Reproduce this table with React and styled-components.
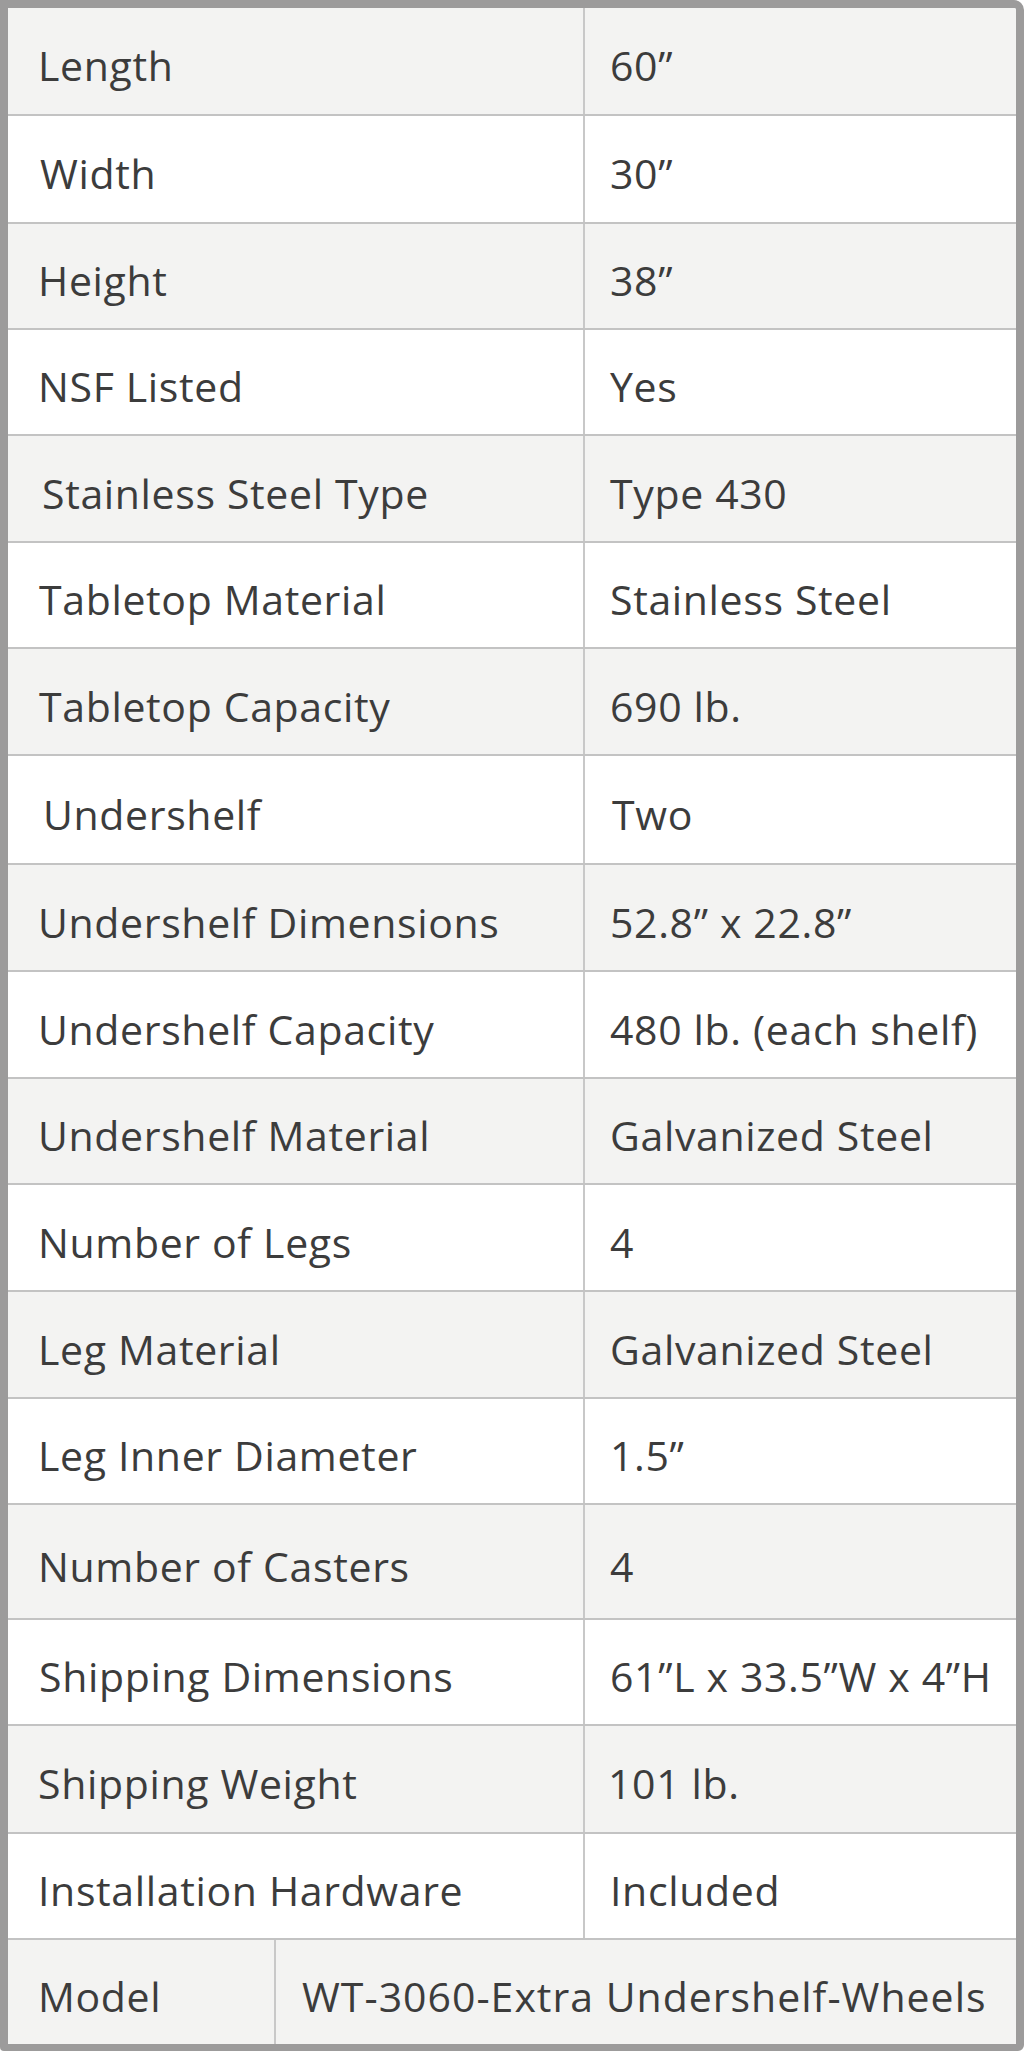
import React from "react";
import styled, { createGlobalStyle } from "styled-components";

const GlobalStyle = createGlobalStyle`
  html, body {
    margin: 0;
    padding: 0;
    background: #ffffff;
  }
  body {
    font-family: "Open Sans", "Liberation Sans", sans-serif;
  }
`;

const Frame = styled.div`
  box-sizing: border-box;
  width: 1024px;
  height: 2051px;
  border: 8px solid #9c9b9b;
  border-bottom-width: 7px;
  border-radius: 0 10px 6px 4px;
  background: #ffffff;
  display: flex;
  flex-direction: column;
  overflow: hidden;
`;

const Row = styled.div`
  box-sizing: border-box;
  display: grid;
  grid-template-columns: ${(p) => (p.$wide ? "268px 1fr" : "577px 1fr")};
  height: ${(p) => p.$h}px;
  flex-shrink: 0;
  background: ${(p) => (p.$shade ? "#f3f3f2" : "#ffffff")};
  border-bottom: ${(p) => (p.$last ? "none" : "2px solid #c3c3c3")};
`;

const Cell = styled.div`
  box-sizing: border-box;
  display: flex;
  align-items: center;
  padding-left: ${(p) => 30 + (p.$shift || 0)}px;
  padding-top: 8px;
  font-size: 41px;
  letter-spacing: ${(p) => (p.$loose ? "1px" : "0.65px")};
  color: #3c3c3c;
  white-space: nowrap;
  border-right: ${(p) => (p.$label ? "2px solid #c8c8c8" : "none")};
`;

const specs = [
  { label: "Length", value: "60\u201D", h: 108 },
  { label: "Width", value: "30\u201D", h: 108, ls: 2 },
  { label: "Height", value: "38\u201D", h: 106 },
  { label: "NSF Listed", value: "Yes", h: 106 },
  { label: "Stainless Steel Type", value: "Type 430", h: 107, ls: 4 },
  { label: "Tabletop Material", value: "Stainless Steel", h: 106, ls: 1 },
  { label: "Tabletop Capacity", value: "690 lb.", h: 107, ls: 1 },
  { label: "Undershelf", value: "Two", h: 109, ls: 5, vs: 2 },
  { label: "Undershelf Dimensions", value: "52.8\u201D x 22.8\u201D", h: 107 },
  { label: "Undershelf Capacity", value: "480 lb. (each shelf)", h: 107 },
  { label: "Undershelf Material", value: "Galvanized Steel", h: 106 },
  { label: "Number of Legs", value: "4", h: 107 },
  { label: "Leg Material", value: "Galvanized Steel", h: 107 },
  { label: "Leg Inner Diameter", value: "1.5\u201D", h: 106 },
  { label: "Number of Casters", value: "4", h: 115 },
  { label: "Shipping Dimensions", value: "61\u201DL x 33.5\u201DW x 4\u201DH", h: 106, ls: 1 },
  { label: "Shipping Weight", value: "101 lb.", h: 108, vs: -2 },
  { label: "Installation Hardware", value: "Included", h: 106 },
];

export default function App() {
  return (
    <>
      <GlobalStyle />
      <Frame>
        {specs.map((s, i) => (
          <Row key={s.label} $h={s.h} $shade={i % 2 === 0}>
            <Cell $label $shift={s.ls}>
              {s.label}
            </Cell>
            <Cell $shift={(s.vs || 0) - 5}>{s.value}</Cell>
          </Row>
        ))}
        <Row $h={104} $shade $wide $last>
          <Cell $label>Model</Cell>
          <Cell $shift={-4} $loose>
            WT-3060-Extra Undershelf-Wheels
          </Cell>
        </Row>
      </Frame>
    </>
  );
}
